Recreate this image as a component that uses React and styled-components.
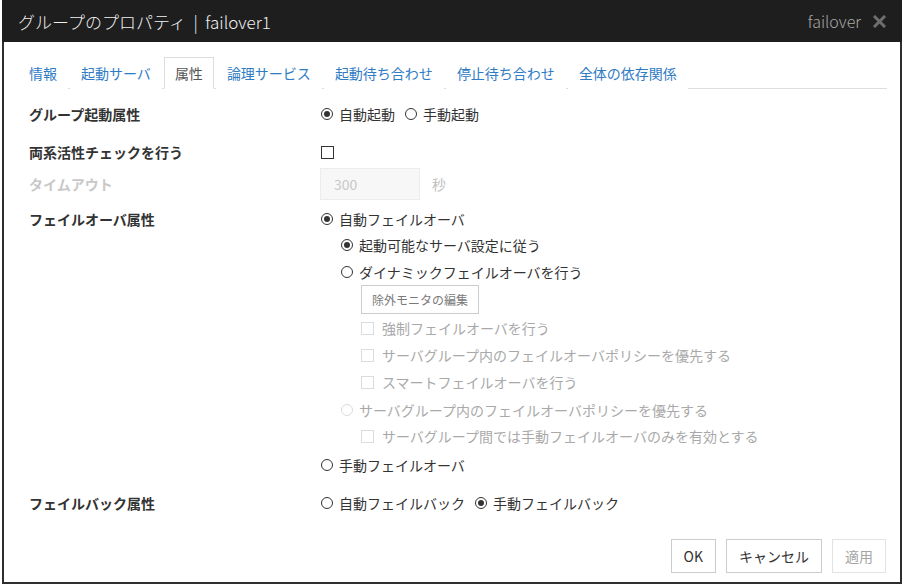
import React from 'react'
import styled, { createGlobalStyle } from 'styled-components'

const GlobalStyle = createGlobalStyle`
  html, body {
    margin: 0;
    padding: 0;
    background: #ffffff;
  }
  body {
    font-family: "Noto Sans CJK JP", "Noto Sans", sans-serif;
    font-size: 14px;
    color: #333;
  }
`

const Dialog = styled.div`
  box-sizing: border-box;
  margin-left: 2px;
  width: 900px;
  height: 584px;
  border: 2px solid #2e2e2e;
  border-top: 0;
  background: #fff;
  display: flex;
  flex-direction: column;
`

const Header = styled.div`
  height: 42px;
  flex: none;
  background: #1e1e1e;
  display: flex;
  align-items: center;
  justify-content: space-between;
  padding: 0 16px 0 14px;
  margin: 0 -2px;
`

const Title = styled.div`
  color: #f0f0f0;
  font-size: 17px;
  font-weight: 300;
  padding-left: 2px;
  white-space: pre;
`

const HeaderRight = styled.div`
  display: flex;
  align-items: center;
  gap: 12px;
`

const GroupName = styled.span`
  color: #a8a8a8;
  font-size: 16px;
  font-weight: 300;
`

const TabBar = styled.div`
  display: flex;
  margin: 15px 13px 0 14px;
  height: 31px;
  border-bottom: 1px solid #ddd;
`

const Tab = styled.div`
  height: 30px;
  line-height: 30px;
  padding: 0 10px;
  margin-right: 2px;
  border: 1px solid ${({ $active }) => ($active ? '#ddd' : 'transparent')};
  border-bottom-color: ${({ $active }) => ($active ? '#fff' : 'transparent')};
  background: #fff;
  color: ${({ $active }) => ($active ? '#555' : '#2f7bc4')};
  white-space: nowrap;
`

const Form = styled.div`
  display: flex;
  flex-direction: column;
`

const FieldRow = styled.div`
  display: flex;
  align-items: flex-start;
  margin-top: ${({ $mt }) => $mt || 0}px;
  padding-left: 25px;
`

const Label = styled.div`
  width: 291px;
  flex: none;
  height: ${({ $h }) => $h || 26}px;
  line-height: ${({ $h }) => $h || 26}px;
  font-weight: bold;
  color: ${({ $disabled }) => ($disabled ? '#c8c8c8' : '#333')};
`

const Values = styled.div`
  display: flex;
  flex-direction: column;
  align-items: flex-start;
`

const Inline = styled.div`
  display: flex;
  align-items: center;
  height: ${({ $h }) => $h || 26}px;
`

const Option = styled.label`
  display: flex;
  align-items: center;
  height: 26px;
  margin-top: ${({ $mt }) => $mt || 0}px;
  margin-left: ${({ $level }) => ($level || 0) * 20 + 1}px;
  margin-right: ${({ $mr }) => $mr || 0}px;
  color: ${({ $disabled }) => ($disabled ? '#a9a9a9' : '#333')};
  white-space: nowrap;
`

const Radio = styled.span`
  box-sizing: border-box;
  width: 12px;
  height: 12px;
  border-radius: 50%;
  border: 1px solid ${({ $disabled }) => ($disabled ? '#dcdcdc' : '#333')};
  margin-right: 6px;
  display: flex;
  align-items: center;
  justify-content: center;
  flex: none;
  &::after {
    content: '';
    display: ${({ $checked }) => ($checked ? 'block' : 'none')};
    width: 6px;
    height: 6px;
    border-radius: 50%;
    background: #333;
  }
`

const Check = styled.span`
  box-sizing: border-box;
  width: 13px;
  height: 13px;
  border: ${({ $disabled }) => ($disabled ? '1px solid #dcdcdc' : '1.5px solid #333')};
  margin-right: 8px;
  flex: none;
`

const TextInput = styled.div`
  box-sizing: border-box;
  width: 100px;
  height: 32px;
  border: 1px solid #ececec;
  background: #f7f7f7;
  color: #c8c8c8;
  line-height: 30px;
  padding-left: 13px;
`

const Unit = styled.span`
  color: #c0c0c0;
  margin-left: 12px;
`

const SubButton = styled.div`
  box-sizing: border-box;
  width: 118px;
  height: 29px;
  line-height: 27px;
  margin-left: 41px;
  border: 1px solid #ccc;
  color: #7a7a7a;
  font-size: 12px;
  text-align: center;
`

const Footer = styled.div`
  margin-top: auto;
  display: flex;
  justify-content: flex-end;
  gap: 10px;
  padding: 0 14px 9px 0;
`

const Button = styled.div`
  box-sizing: border-box;
  height: 34px;
  line-height: 32px;
  padding: 0 12px;
  border: 1px solid ${({ $disabled }) => ($disabled ? '#e3e3e3' : '#ccc')};
  color: ${({ $disabled }) => ($disabled ? '#a5a5a5' : '#333')};
  background: #fff;
`

const tabs = ['情報', '起動サーバ', '属性', '論理サービス', '起動待ち合わせ', '停止待ち合わせ', '全体の依存関係']

const CloseIcon = () => (
  <svg width="13" height="13" viewBox="0 0 13 13">
    <path d="M2 2 L11 11 M11 2 L2 11" stroke="#6e6e6e" strokeWidth="3" strokeLinecap="square" />
  </svg>
)

const App = () => {
  return (
    <>
      <GlobalStyle />
      <Dialog>
        <Header>
          <Title>{'グループのプロパティ  |  failover1'}</Title>
          <HeaderRight>
            <GroupName>failover</GroupName>
            <CloseIcon />
          </HeaderRight>
        </Header>

        <TabBar>
          {tabs.map((t) => (
            <Tab key={t} $active={t === '属性'}>{t}</Tab>
          ))}
        </TabBar>

        <Form>
          <FieldRow $mt={12}>
            <Label>グループ起動属性</Label>
            <Inline>
              <Option $mr={9}><Radio $checked />自動起動</Option>
              <Option><Radio />手動起動</Option>
            </Inline>
          </FieldRow>

          <FieldRow $mt={12}>
            <Label>両系活性チェックを行う</Label>
            <Inline>
              <Option><Check /></Option>
            </Inline>
          </FieldRow>

          <FieldRow $mt={3}>
            <Label $disabled $h={32}>タイムアウト</Label>
            <Inline $h={32}>
              <TextInput>300</TextInput>
              <Unit>秒</Unit>
            </Inline>
          </FieldRow>

          <FieldRow $mt={6}>
            <Label>フェイルオーバ属性</Label>
            <Values>
              <Option><Radio $checked />自動フェイルオーバ</Option>
              <Option $level={1}><Radio $checked />起動可能なサーバ設定に従う</Option>
              <Option $level={1} $mt={1}><Radio />ダイナミックフェイルオーバを行う</Option>
              <SubButton>除外モニタの編集</SubButton>
              <Option $level={2} $mt={1} $disabled><Check $disabled />強制フェイルオーバを行う</Option>
              <Option $level={2} $mt={1} $disabled><Check $disabled />サーバグループ内のフェイルオーバポリシーを優先する</Option>
              <Option $level={2} $mt={1} $disabled><Check $disabled />スマートフェイルオーバを行う</Option>
              <Option $level={1} $mt={2} $disabled><Radio $disabled />サーバグループ内のフェイルオーバポリシーを優先する</Option>
              <Option $level={2} $disabled><Check $disabled />サーバグループ間では手動フェイルオーバのみを有効とする</Option>
              <Option $mt={3}><Radio />手動フェイルオーバ</Option>
            </Values>
          </FieldRow>

          <FieldRow $mt={12}>
            <Label>フェイルバック属性</Label>
            <Inline>
              <Option $mr={9}><Radio />自動フェイルバック</Option>
              <Option><Radio $checked />手動フェイルバック</Option>
            </Inline>
          </FieldRow>
        </Form>

        <Footer>
          <Button>OK</Button>
          <Button>キャンセル</Button>
          <Button $disabled>適用</Button>
        </Footer>
      </Dialog>
    </>
  )
}

export default App
